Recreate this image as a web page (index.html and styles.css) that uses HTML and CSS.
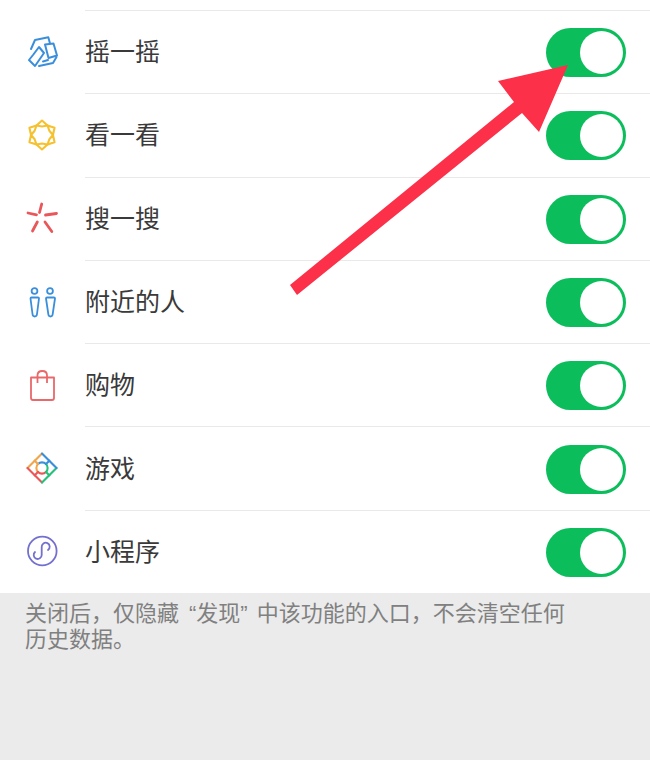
FILE: index.html
```html
<!DOCTYPE html>
<html lang="zh-CN">
<head>
  <meta charset="UTF-8">
  <title>发现页管理</title>
  <link rel="stylesheet" href="styles.css">
</head>
<body>
  <ul class="list">
    <li class="row">
      <svg class="icon" viewBox="0 0 36 36" fill="none" stroke="#3a8fdc" stroke-width="2" stroke-linejoin="round" stroke-linecap="round">
        <path d="M7 15 L11 6 L24.300 3.300 L26 9.500"/>
        <path d="M21 10.500 L29.500 9.500 L33 21.500 L24.500 24 Z"/>
        <path d="M15 13 L20 19 L11 32 L5 26 L9 21 Z"/>
        <path d="M15 32 L29 29 L32.500 23"/>
        <path d="M19 27.500 L24 26"/>
      </svg>
      <span class="label">摇一摇</span>
      <span class="toggle"><span class="knob"></span></span>
    </li>
    <li class="row">
      <svg class="icon" viewBox="0 0 36 36" fill="none" stroke="#f5c12e" stroke-width="2.100" stroke-linejoin="round">
        <path d="M18 3.500 L23.500 8.500 L18 9.500 L12.500 8.500 Z"/>
        <path d="M18 3.500 L23.500 8.500 L18 9.500 L12.500 8.500 Z" transform="rotate(60 18 18)"/>
        <path d="M18 3.500 L23.500 8.500 L18 9.500 L12.500 8.500 Z" transform="rotate(120 18 18)"/>
        <path d="M18 3.500 L23.500 8.500 L18 9.500 L12.500 8.500 Z" transform="rotate(180 18 18)"/>
        <path d="M18 3.500 L23.500 8.500 L18 9.500 L12.500 8.500 Z" transform="rotate(240 18 18)"/>
        <path d="M18 3.500 L23.500 8.500 L18 9.500 L12.500 8.500 Z" transform="rotate(300 18 18)"/>
      </svg>
      <span class="label">看一看</span>
      <span class="toggle"><span class="knob"></span></span>
    </li>
    <li class="row">
      <svg class="icon" viewBox="0 0 36 36" fill="none" stroke="#e9575b" stroke-width="2.800" stroke-linecap="round">
        <path d="M17.700 4 L15.500 12.500"/>
        <path d="M4 13 L12.500 14.800"/>
        <path d="M21.500 15 L32.500 13.500"/>
        <path d="M13.300 22 L8.500 31"/>
        <path d="M21 22 L27.800 31.500"/>
      </svg>
      <span class="label">搜一搜</span>
      <span class="toggle"><span class="knob"></span></span>
    </li>
    <li class="row">
      <svg class="icon" viewBox="0 0 36 36" fill="none" stroke="#3a8fdc" stroke-width="1.800" stroke-linejoin="round">
        <circle cx="10.500" cy="7" r="2.900"/>
        <circle cx="26" cy="7" r="2.900"/>
        <path d="M6.500 14.500 Q6.500 13.500 7.500 13.500 H14 Q15 13.500 15 14.500 L13 30 Q12.800 32.500 10.700 32.500 Q8.700 32.500 8.500 30 Z"/>
        <path d="M22 14.500 Q22 13.500 23 13.500 H30 Q31 13.500 31 14.500 L28.700 30 Q28.500 32.500 26.500 32.500 Q24.500 32.500 24.300 30 Z"/>
      </svg>
      <span class="label">附近的人</span>
      <span class="toggle"><span class="knob"></span></span>
    </li>
    <li class="row">
      <svg class="icon" viewBox="0 0 36 36" fill="none" stroke="#e9686a" stroke-width="1.800" stroke-linejoin="round">
        <path d="M7 10.500 H30 V31 Q30 33 28 33 H9 Q7 33 7 31 Z"/>
        <path d="M13.500 16 V8.500 Q13.500 4 18.300 4 Q23 4 23 8.500 V16"/>
      </svg>
      <span class="label">购物</span>
      <span class="toggle"><span class="knob"></span></span>
    </li>
    <li class="row">
      <svg class="icon" viewBox="0 0 36 36" fill="none" stroke-width="2.100" stroke-linecap="round">
        <path d="M18 3.500 L3.500 18" stroke="#f0a64a"/>
        <path d="M3.500 18 L18 32.500" stroke="#e9575b"/>
        <path d="M18 32.500 L32.500 18" stroke="#25c07a"/>
        <path d="M32.500 18 L18 3.500" stroke="#3a8fdc"/>
        <path d="M14 14 A5.700 5.700 0 0 1 22 14" stroke="#3a8fdc"/>
        <path d="M14 22 A5.700 5.700 0 0 1 14 14" stroke="#f0a64a"/>
        <path d="M22 22 A5.700 5.700 0 0 1 14 22" stroke="#e9575b"/>
        <path d="M22 14 A5.700 5.700 0 0 1 22 22" stroke="#25c07a"/>
        <path d="M10.700 10.700 L14 14" stroke="#f0a64a"/>
        <path d="M25.300 10.700 L22 14" stroke="#3a8fdc"/>
        <path d="M10.700 25.300 L14 22" stroke="#e9575b"/>
        <path d="M25.300 25.300 L22 22" stroke="#25c07a"/>
      </svg>
      <span class="label">游戏</span>
      <span class="toggle"><span class="knob"></span></span>
    </li>
    <li class="row">
      <svg class="icon" viewBox="0 0 36 36" fill="none" stroke="#7470cf" stroke-width="1.800" stroke-linecap="round">
        <circle cx="18.300" cy="18" r="14.300"/>
        <path d="M11 19 A4 4 0 1 0 17.700 22 V14 A4 4 0 1 1 24 17"/>
      </svg>
      <span class="label">小程序</span>
      <span class="toggle"><span class="knob"></span></span>
    </li>
  </ul>
  <p class="note">关闭后，仅隐藏<span class="quote-open">“</span>发现<span class="quote-close">”</span>中该功能的入口，不会清空任何<br>历史数据。</p>

  <svg class="arrow" viewBox="0 0 650 760">
    <polygon points="290,285 297,295 522,113 539,132 568,65 498,81 514,102" fill="#fc3049"/>
  </svg>
</body>
</html>
```

FILE: styles.css
```css
html, body {
  margin: 0;
  padding: 0;
  height: 100%;
}

body {
  position: relative;
  height: 760px;
  overflow: hidden;
  background: #ebebeb;
  font-family: "Liberation Sans", "Noto Sans CJK SC", sans-serif;
}

.list {
  list-style: none;
  margin: 0;
  padding: 10px 0 0;
  background: #fff;
}

.row {
  position: relative;
  display: flex;
  align-items: center;
  height: 83.3px;
  padding: 0 24px;
  box-sizing: border-box;
}

/* separator starts after the icon column */
.row::before {
  content: "";
  position: absolute;
  top: 0;
  left: 85px;
  right: 0;
  height: 1px;
  background: #e9e9e9;
}

.icon {
  width: 36px;
  height: 36px;
  flex: none;
}

.label {
  flex: 1;
  margin-left: 25px;
  padding-bottom: 3px;
  font-size: 25px;
  color: #3a3a3a;
}

.toggle {
  display: flex;
  justify-content: flex-end;
  align-items: center;
  width: 80px;
  height: 49px;
  margin-top: 2px;
  box-sizing: border-box;
  padding: 3px;
  border-radius: 25px;
  background: #0cbd5c;
}

.knob {
  width: 43px;
  height: 43px;
  border-radius: 50%;
  background: #fff;
}

.note {
  margin: 0;
  padding: 8px 20px 0 25px;
  font-size: 22px;
  line-height: 26px;
  color: #808080;
}

/* the quotes are wider here than in the latin font */
.quote-open {
  padding-left: 10px;
}

.quote-close {
  padding-right: 9px;
}

.arrow {
  position: absolute;
  top: 0;
  left: 0;
  width: 650px;
  height: 760px;
}
```
